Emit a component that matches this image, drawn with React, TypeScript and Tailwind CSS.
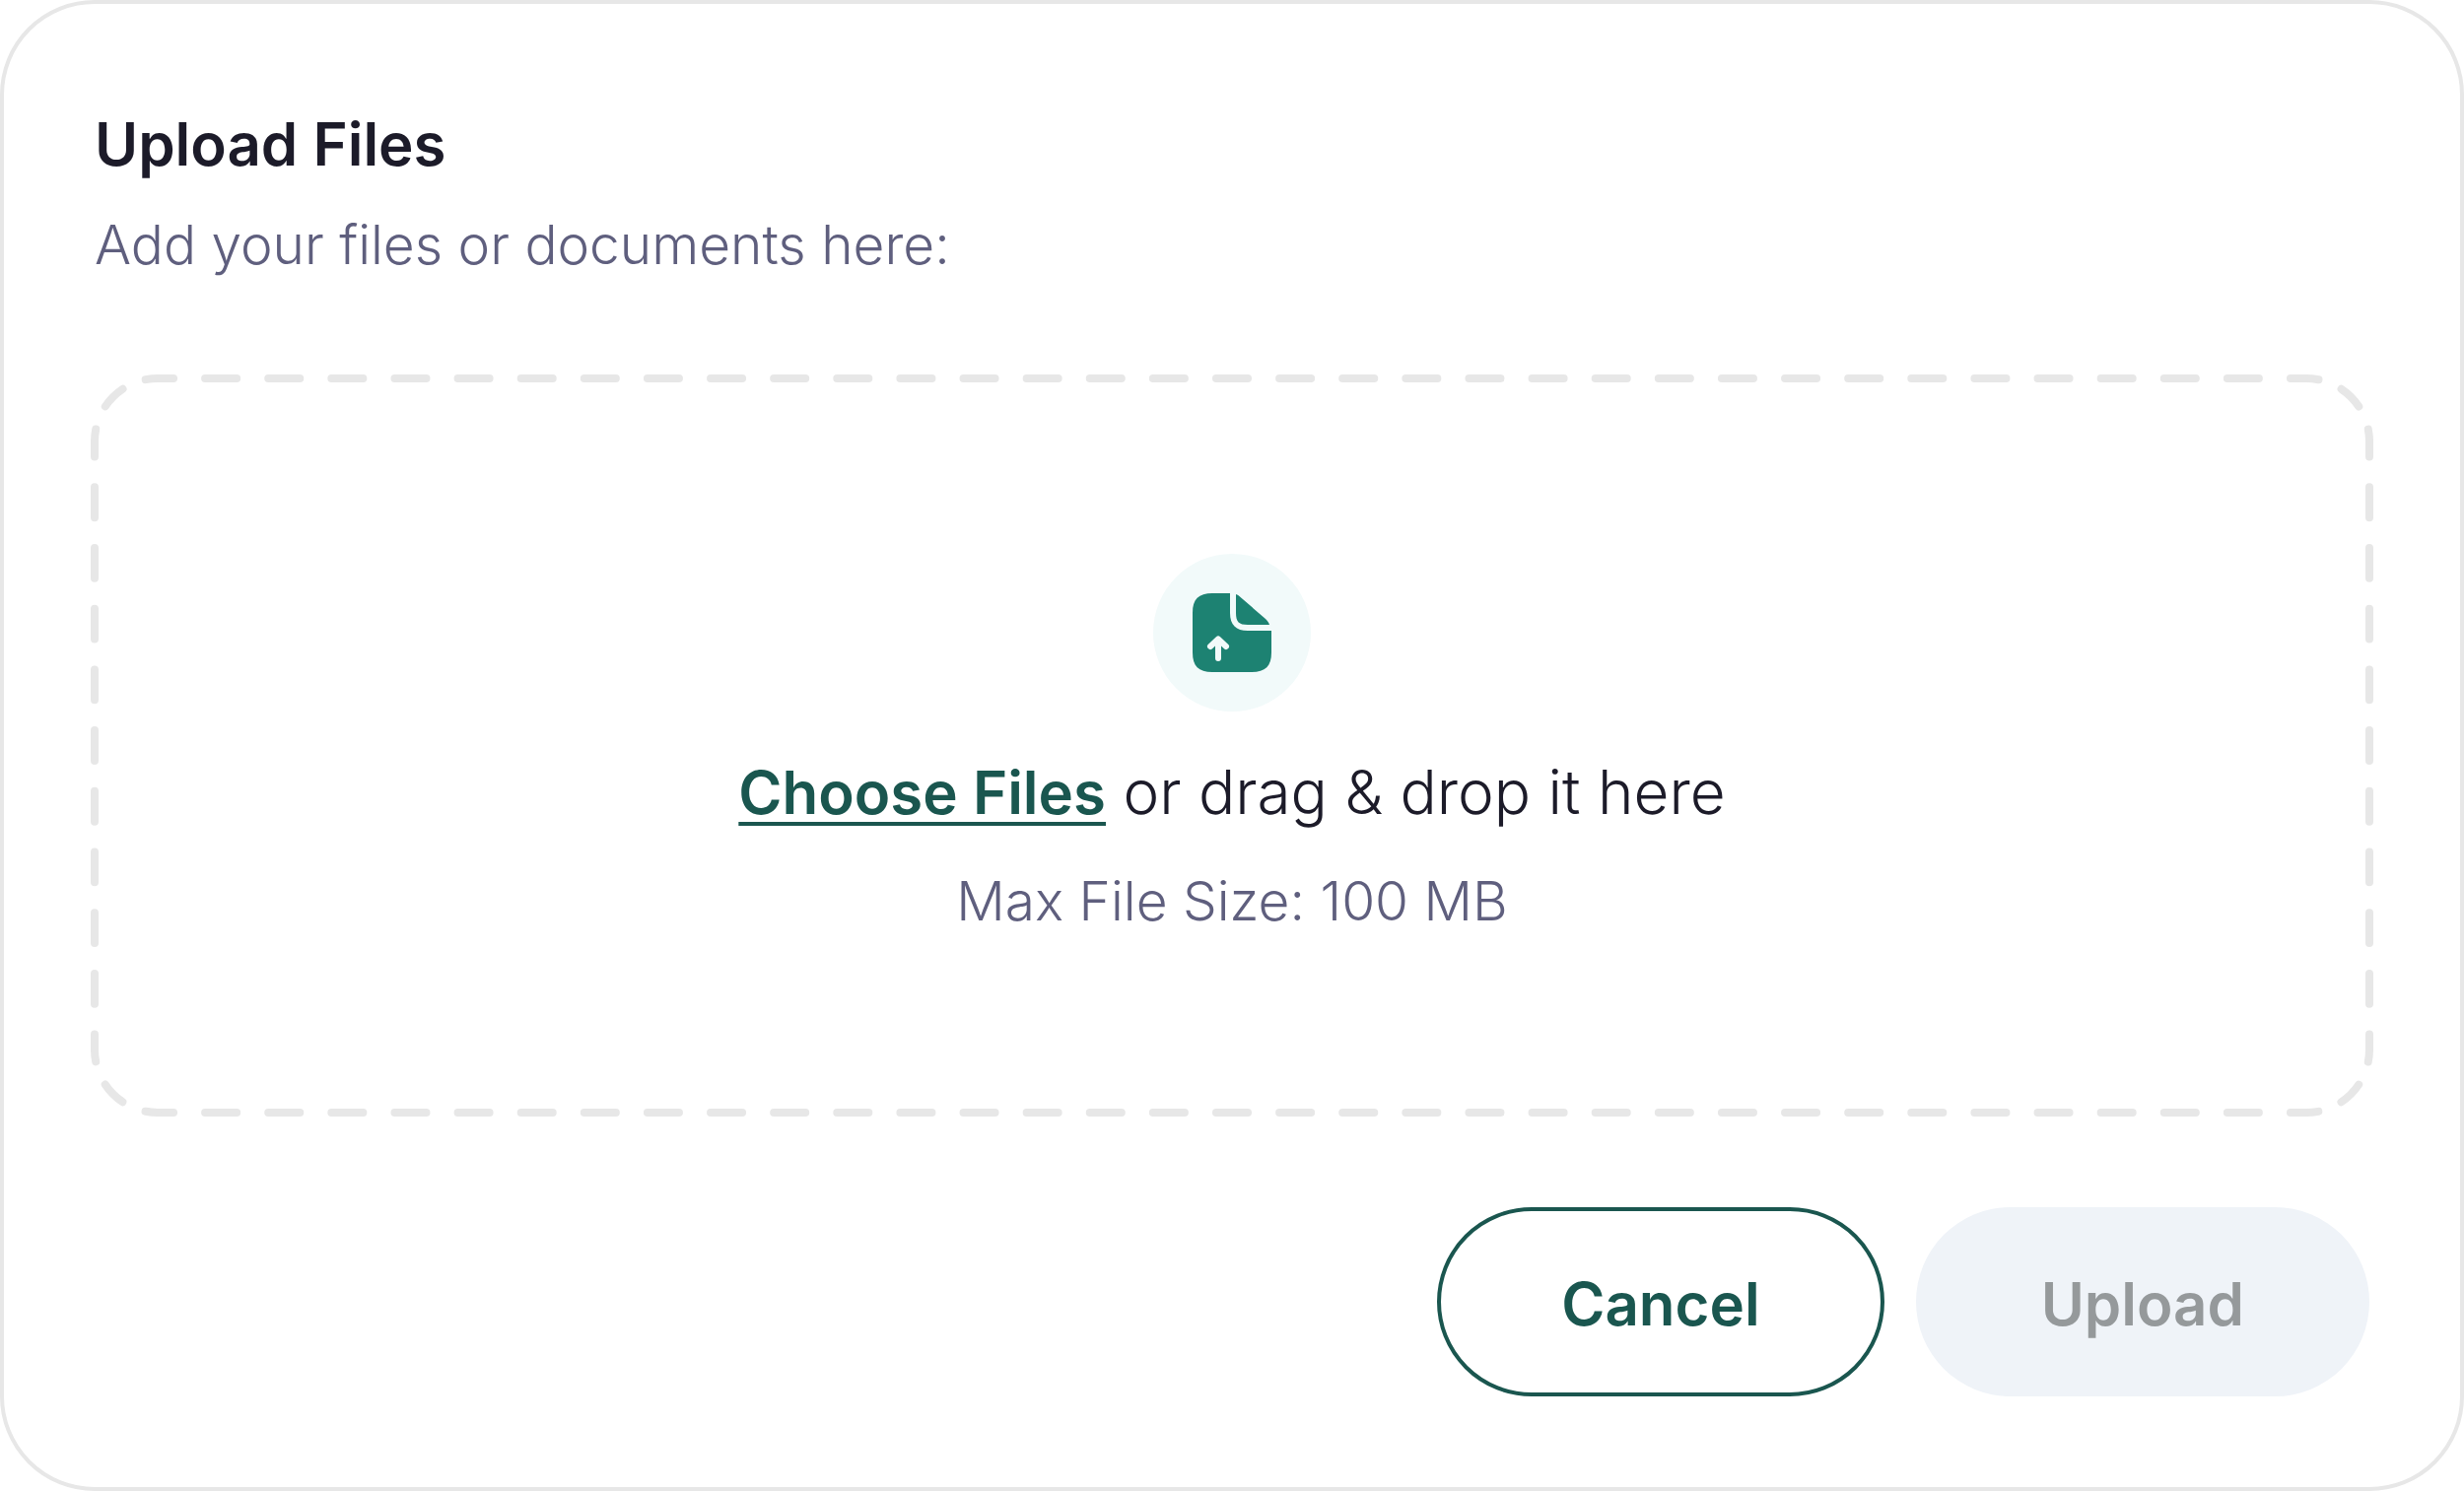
import React, { useLayoutEffect, useRef, useState } from "react";

const RADIUS = 64;
const DASH_PERIOD = 64;

type Size = {
  width: number;
  height: number;
};

type Segment = {
  d: string;
  length: number;
};

// Rounded dashes that meet evenly on every side and corner
const DashedOutline = () => {
  const ref = useRef<SVGSVGElement>(null);
  const [size, setSize] = useState<Size | null>(null);

  useLayoutEffect(() => {
    const svg = ref.current;
    if (!svg) return;

    const measure = () => {
      const { width, height } = svg.getBoundingClientRect();
      setSize({ width, height });
    };

    measure();
    const observer = new ResizeObserver(measure);
    observer.observe(svg);
    return () => observer.disconnect();
  }, []);

  const segments: Segment[] = [];
  if (size) {
    const { width: w, height: h } = size;
    const r = RADIUS;
    const arc = (Math.PI * r) / 2;
    segments.push(
      { d: `M${r} 0H${w - r}`, length: w - 2 * r },
      { d: `M${w - r} 0A${r} ${r} 0 0 1 ${w} ${r}`, length: arc },
      { d: `M${w} ${r}V${h - r}`, length: h - 2 * r },
      { d: `M${w} ${h - r}A${r} ${r} 0 0 1 ${w - r} ${h}`, length: arc },
      { d: `M${w - r} ${h}H${r}`, length: w - 2 * r },
      { d: `M${r} ${h}A${r} ${r} 0 0 1 0 ${h - r}`, length: arc },
      { d: `M0 ${h - r}V${r}`, length: h - 2 * r },
      { d: `M0 ${r}A${r} ${r} 0 0 1 ${r} 0`, length: arc }
    );
  }

  return (
    <svg
      ref={ref}
      className="absolute inset-0 size-full overflow-visible pointer-events-none"
      fill="none"
      stroke="#e7e7e7"
      strokeWidth={8}
      strokeLinecap="round"
      aria-hidden="true"
    >
      {segments.map(({ d, length }) => {
        const period = length / Math.max(2, Math.round(length / DASH_PERIOD));
        return (
          <path
            key={d}
            d={d}
            strokeDasharray={`${period / 2} ${period / 2}`}
            strokeDashoffset={period / 4}
          />
        );
      })}
    </svg>
  );
};

const FileUploadIcon = () => (
  <svg className="size-20" viewBox="0 0 80 80" fill="none" aria-hidden="true">
    <path
      d="M38 0H20C6 0 0 6 0 20V60C0 74 6 80 20 80H60C74 80 80 74 80 60V38H56C44 38 38 32 38 20Z"
      fill="#1d8272"
    />
    <path
      d="M44 1C45.5 1.5 47 2.5 48 3.5L74 26C76 28 77.5 30 78 32H56C47 32 44 29 44 20Z"
      fill="#1d8272"
    />
    <path
      d="M18 54L26 46.5L34 54M26 47.5V66"
      stroke="#f2fafa"
      strokeWidth={6}
      strokeLinecap="round"
      strokeLinejoin="round"
    />
  </svg>
);

const App = () => {
  const inputRef = useRef<HTMLInputElement>(null);

  return (
    <main className="flex flex-col w-full min-h-screen p-[92px] bg-white border-4 border-[#e7e7e7] rounded-[96px] font-['Inter','Liberation_Sans',sans-serif]">
      <h1 className="text-[60px] leading-[100px] font-semibold text-[#1c1b29]">
        Upload Files
      </h1>
      <p className="mt-2 text-[55px] leading-[88px] font-light text-[#5f5f7e]">
        Add your files or documents here:
      </p>

      <section className="relative flex flex-col items-center mt-[92px] pt-[178px] pb-[171px]">
        <DashedOutline />
        <div className="grid place-content-center size-40 rounded-full bg-[#f2fafa]">
          <FileUploadIcon />
        </div>
        <p className="mt-8 text-[62px] leading-[99px] font-light text-[#1c1b29]">
          <button
            type="button"
            onClick={() => inputRef.current?.click()}
            className="text-[60px] font-semibold text-[#1a564f] underline decoration-4 underline-offset-8 [text-decoration-skip-ink:none] cursor-pointer"
          >
            Choose Files
          </button>{" "}
          or drag &amp; drop it here
        </p>
        <input ref={inputRef} type="file" multiple hidden aria-label="Choose Files" />
        <p className="mt-4 text-[55px] leading-[88px] font-light text-[#5f5f7e]">
          Max File Size: 100 MB
        </p>
      </section>

      <div className="flex justify-end gap-8 mt-24 text-[60px] font-semibold">
        <button
          type="button"
          className="h-48 px-[122px] pt-1 border-4 border-[#1a564f] rounded-full text-[#1a564f] cursor-pointer"
        >
          Cancel
        </button>
        <button
          type="button"
          disabled
          className="h-48 px-[127px] pt-1 rounded-full bg-[#eff3f8] text-[#95999b]"
        >
          Upload
        </button>
      </div>
    </main>
  );
};

export default App;
